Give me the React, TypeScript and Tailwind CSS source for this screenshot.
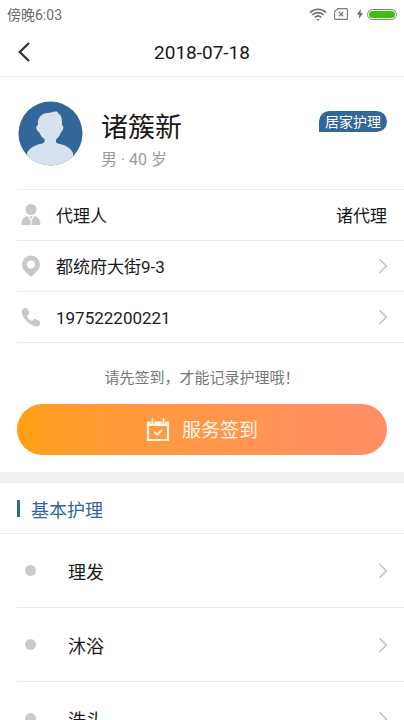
import React from 'react';
import { ChevronRight } from 'lucide-react';

const careItems = ['理发', '沐浴', '洗头'];

const StatusBar = () => (
  <div className="flex h-7 items-center justify-between px-[7px]">
    <span className="pt-px text-[14px] leading-5 text-[#6b6b6b]">傍晚6:03</span>
    <div className="flex items-center">
      <svg width="18" height="13" viewBox="0 0 18 13" fill="none" stroke="#6b6b6b" strokeWidth="1.7">
        <path d="M1 4.600C5.500.1 12.500.1 17 4.600" />
        <path d="M3.400 7c3.300-3.200 7.900-3.200 11.200 0" />
        <path d="M5.800 9.300c2-1.800 4.400-1.800 6.400 0" />
        <path d="M7.300 10.900h3.400L9 12.900z" fill="#6b6b6b" stroke="none" />
      </svg>
      <svg className="ml-[7px]" width="14" height="12" viewBox="0 0 14 12" fill="none" stroke="#777" strokeWidth="1.1">
        <path d="M3.800.6h8.600a1 1 0 0 1 1 1v8.800a1 1 0 0 1-1 1H1.600a1 1 0 0 1-1-1V3.800z" />
        <path d="M5 4l4.200 4.200M9.200 4L5 8.200" strokeWidth="1.3" />
      </svg>
      <svg className="ml-[9px]" width="6" height="10" viewBox="0 0 6 10" fill="#666">
        <path d="M3.800 0L0 5.400h2.400L1.800 10 6 4.200H3.500z" />
      </svg>
      <div className="ml-1 h-[11px] w-[30px] rounded-full border border-[#7d8a78] p-px">
        <div className="h-full rounded-full bg-[#3fbe0c]" />
      </div>
    </div>
  </div>
);

const Avatar = () => (
  <svg width="65" height="65" viewBox="0 0 65 65" role="img" aria-label="头像">
    <defs>
      <clipPath id="avatar">
        <circle cx="32.5" cy="32.5" r="32" />
      </clipPath>
    </defs>
    <g clipPath="url(#avatar)">
      <rect width="65" height="65" fill="#336699" />
      <path
        fill="#d8e2ee"
        d="M20 24c-.8-7 3-11.500 9.500-12 4-.2 5.500-1.700 8.500-1.500 2.200.1 1.300 1.500 2.800 2.200 3 1.500 3.200 6 3.200 11.300 2.300.8 1.500 5.500-1.200 7.500-.8 3-2.300 5-4.500 6.500-1 2.500-.3 4.200 2.200 4.700 7 1.300 12 4 14.500 9.300V65H9V52c2.500-5 7.500-8 14.500-9.300 3-.6 3.800-2.200 2.900-4.700-2.400-1.500-4-3.500-5-6.500-3.400-2-4.200-6.700-1.400-7.500z"
      />
    </g>
  </svg>
);

const PersonIcon = () => (
  <svg width="20" height="22" viewBox="0 0 20 22" fill="#c8c8c8">
    <circle cx="10" cy="5.500" r="5.500" />
    <path d="M6.500 12L9.500 16.500V21H.5c0-4.500 1.500-8 6-9zM13.500 12l-3 4.500V21h9c0-4.500-1.500-8-6-9z" />
    <path d="M8.300 12.200h3.400L10 15.200z" />
  </svg>
);

const PinIcon = () => (
  <svg width="20" height="22" viewBox="0 0 20 22" fill="#c8c8c8">
    <path
      fillRule="evenodd"
      d="M10 .5a9 9 0 0 0-9 9c0 4.300 4.200 8.300 7.800 11.600a1.800 1.800 0 0 0 2.400 0C14.800 17.800 19 13.800 19 9.500a9 9 0 0 0-9-9zm0 5a4 4 0 1 1 0 8 4 4 0 0 1 0-8z"
    />
  </svg>
);

const PhoneIcon = () => (
  <svg width="20" height="20" viewBox="0 0 20 20" fill="#c8c8c8">
    <path d="M2.300 1.600C4 .5 6 .9 6.900 2.800l.9 2c.7 1.700.1 2.700-1.600 3.700-.5.300-.4.900 0 1.500 1 1.600 2.200 2.800 3.800 3.800.6.400 1.200.5 1.500 0 1-1.700 2.200-2.200 3.800-1.400l2.300 1.100c1.800.9 2.200 2.800 1.100 4.400-1.200 1.700-3.800 2-6.800.7C7.700 16.800 3.600 12.800 1.500 8.300.2 5.400.5 2.800 2.300 1.600z" />
  </svg>
);

const CalendarIcon = () => (
  <svg width="24" height="24" viewBox="0 0 24 24" fill="none" stroke="#fff7e6">
    <path d="M2 4.500h20v17.500H2z" strokeWidth="2.200" strokeLinejoin="round" />
    <path d="M1.500 4h21v4h-21z" fill="#fff7e6" stroke="none" />
    <path d="M6.500 0v5.500M17.500 0v5.500" stroke="#ff9838" strokeWidth="3.600" />
    <path d="M6.500 1v4M17.500 1v4" strokeWidth="1.800" strokeLinecap="round" />
    <path d="M8.300 14l2.900 2.700 4.800-4.700" strokeWidth="2" />
  </svg>
);

const Arrow = () => <ChevronRight size={26} strokeWidth={1.5} className="-mr-[9px] shrink-0 text-[#c4c4c4]" />;

const App = () => {
  return (
    <div className="bg-white font-[Roboto,'Noto_Sans_CJK_SC',sans-serif] text-[#1a1a1a]">
      <StatusBar />

      <header className="grid h-[49px] grid-cols-[48px_1fr_48px] items-center border-b border-[#f0f0f0]">
        <button type="button" aria-label="返回" className="flex h-full items-center pl-[18px]">
          <svg width="12" height="20" viewBox="0 0 12 20" fill="none" stroke="#333" strokeWidth="2.300">
            <path d="M11 1L1.800 10 11 19" />
          </svg>
        </button>
        <h1 className="pt-px text-center text-[19px] leading-6">2018-07-18</h1>
      </header>

      <section className="pl-[17px]">
        <div className="flex h-[113px] items-center border-b border-[#ececec] pl-px pr-[17px]">
          <Avatar />
          <div className="ml-[18px] flex-1 pt-4">
            <h2 className="text-[27px] leading-9">诸簇新</h2>
            <p className="mt-[2px] text-[16px] leading-6 text-[#9b9b9b]">男 · 40 岁</p>
          </div>
          <span className="mt-[34px] self-start rounded-full rounded-bl-none bg-[#336699] px-[6px] pt-px text-[14px] leading-5 text-white">
            居家护理
          </span>
        </div>

        <div className="flex h-[51px] items-center border-b border-[#ececec] pl-1 pr-[17px] text-[17px]">
          <PersonIcon />
          <span className="ml-[15px] flex-1 pt-1">代理人</span>
          <span className="pt-1">诸代理</span>
        </div>
        <a href="#address" className="flex h-[51px] items-center border-b border-[#ececec] pl-1 pr-[17px] text-[17px]">
          <PinIcon />
          <span className="ml-[15px] flex-1 pt-1">都统府大街9-3</span>
          <Arrow />
        </a>
        <a href="tel:197522200221" className="flex h-[51px] items-center border-b border-[#ececec] pl-1 pr-[17px] text-[17px]">
          <PhoneIcon />
          <span className="ml-[15px] flex-1 pt-1">197522200221</span>
          <Arrow />
        </a>
      </section>

      <section className="px-[17px] pb-[17px] pt-[23px]">
        <p className="text-center text-[15px] leading-6 text-[#777]">请先签到，才能记录护理哦！</p>
        <button
          type="button"
          className="mt-[14px] flex h-[51px] w-full items-center justify-center gap-3 rounded-full bg-linear-to-r from-[#ffa012] to-[#ff8d66] text-[19px] text-[#fff7e6]"
        >
          <CalendarIcon />
          <span className="pt-1">服务签到</span>
        </button>
      </section>

      <section className="border-t-[11px] border-[#f1f1f1]">
        <div className="flex h-[51px] items-center border-b border-[#ececec] pl-[17px]">
          <span className="h-[17px] w-[3px] bg-[#336699]" />
          <h3 className="ml-[11px] pt-1 text-[18px] text-[#336699]">基本护理</h3>
        </div>
        <ul className="pl-[17px]">
          {careItems.map((item) => (
            <li key={item} className="border-b border-[#ececec]">
              <a href="#care" className="flex h-[73px] items-center pl-2 pr-[17px] text-[18px]">
                <span className="h-[11px] w-[11px] rounded-full bg-[#cbcbcb]" />
                <span className="ml-8 flex-1 pt-1">{item}</span>
                <Arrow />
              </a>
            </li>
          ))}
        </ul>
      </section>
    </div>
  );
};

export default App;
